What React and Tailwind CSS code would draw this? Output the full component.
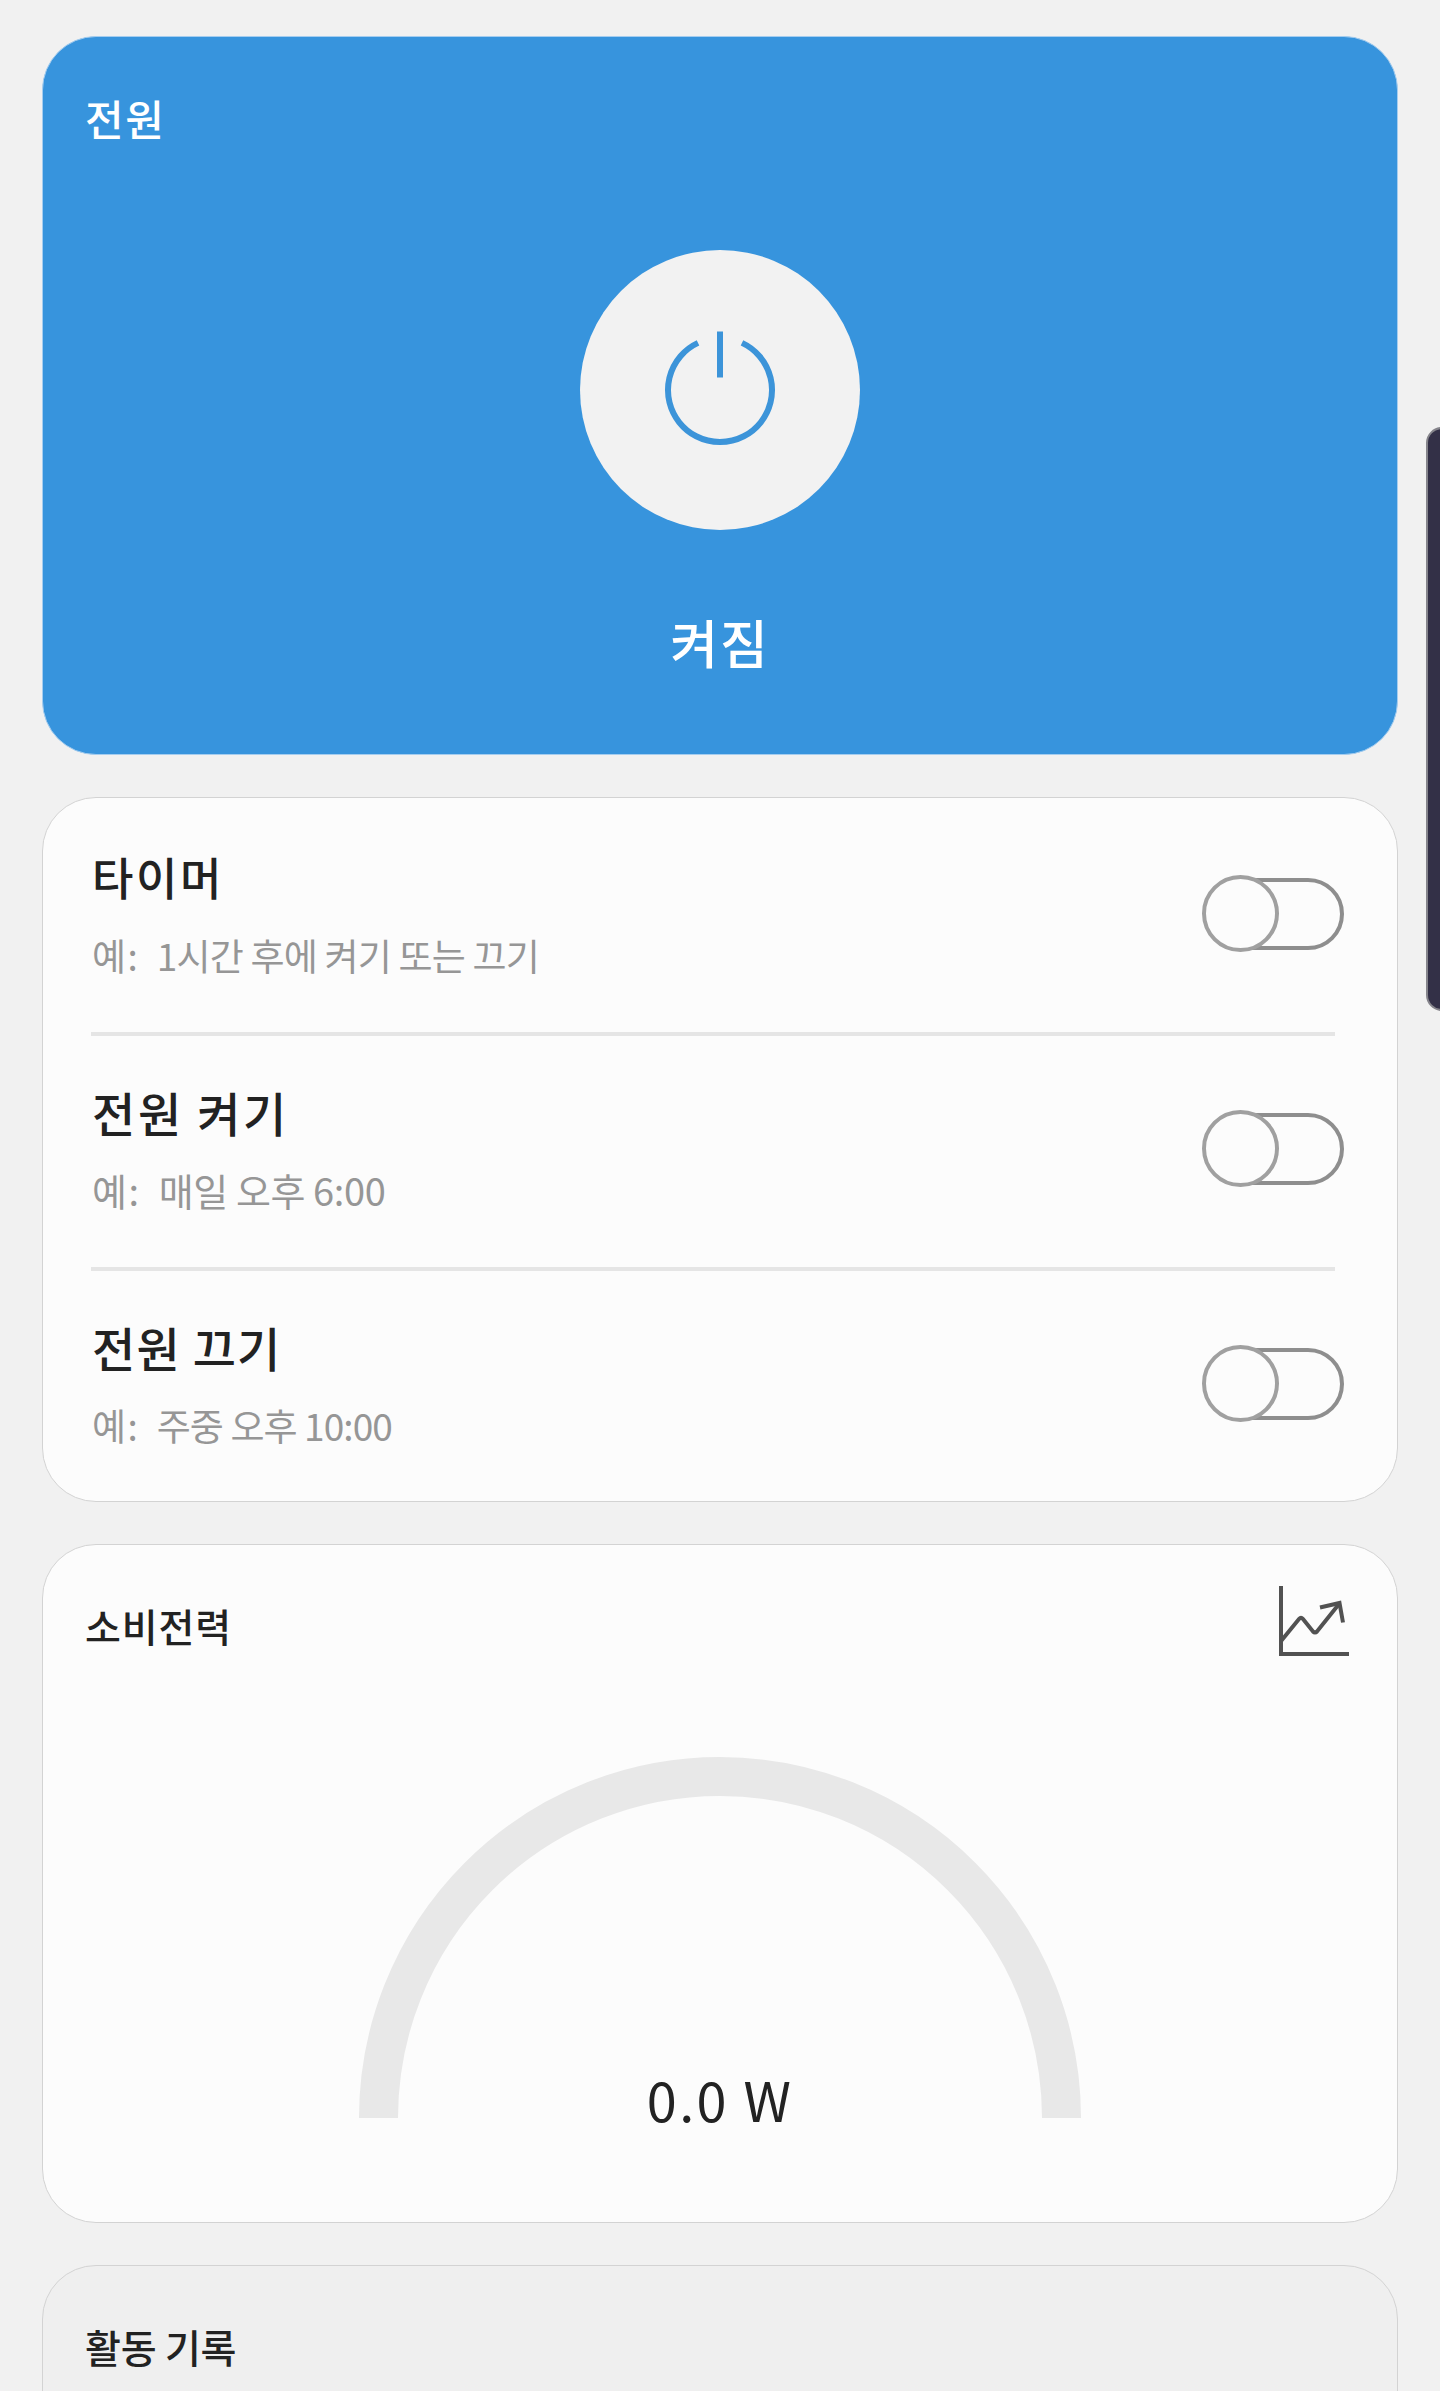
import React, { useState } from "react";

const schedules = [
  {
    id: "timer",
    titulo: "타이머",
    hint: "1시간 후에 켜기 또는 끄기",
    titleClass: "text-[45px] tracking-[2.6px]",
    hintClass: "text-[37px] tracking-[-0.8px]",
  },
  {
    id: "on",
    titulo: "전원 켜기",
    hint: "매일 오후 6:00",
    titleClass: "text-[47px] tracking-[2.7px]",
    hintClass: "text-[38px] tracking-[-0.4px]",
  },
  {
    id: "off",
    titulo: "전원 끄기",
    hint: "주중 오후 10:00",
    titleClass: "text-[47px] tracking-[1.2px]",
    hintClass: "text-[37px] tracking-[-0.9px]",
  },
];

function PowerIcon() {
  return (
    <svg width="120" height="120" viewBox="0 0 120 120" fill="none" stroke="#3c94d9" strokeWidth="6">
      <path d="M38 12.9A52 52 0 1 0 82 12.9" />
      <path d="M60 1.5V47.5" />
    </svg>
  );
}

function ChartIcon() {
  return (
    <svg width="72" height="72" viewBox="0 0 72 72" fill="none" stroke="#525252" strokeWidth="4">
      <path d="M3 1V69H71" />
      <path d="M3.5 55.5L21.2 33.8Q23 31.8 24.8 33.8L35 46.5Q37 48.6 39 46.5L61 19" />
      <path d="M42 22.5L61.5 18L65 37.5" />
    </svg>
  );
}

function Toggle({ checked, onChange }) {
  return (
    <button
      type="button"
      role="switch"
      aria-checked={checked}
      onClick={onChange}
      className="relative w-[142px] h-[77px] shrink-0 flex items-center justify-end"
    >
      <span className="w-[138px] h-[72px] rounded-full border-4 border-[#8e8e8e]" />
      <span
        className={`absolute top-0 w-[77px] h-[77px] rounded-full border-4 border-[#a0a0a0] bg-[#fcfcfc] ${
          checked ? "right-0" : "left-0"
        }`}
      />
    </button>
  );
}

function App() {
  const [active, setActive] = useState({});

  const toggle = (id) => setActive((prev) => ({ ...prev, [id]: !prev[id] }));

  return (
    <div className="relative h-[2391px] overflow-hidden bg-[#f1f1f1] px-[42px] pt-9 flex flex-col gap-[42px] text-[#222222] font-medium font-['Noto_Sans_CJK_KR',sans-serif]">
      <section className="h-[719px] shrink-0 rounded-[54px] border border-[#a5cdef] bg-[#3794dd] text-white flex flex-col items-center">
        <h2 className="self-start ml-[42px] mt-[51px] text-[42px] leading-[60px] tracking-[1.5px]">전원</h2>
        <button
          type="button"
          className="mt-[102px] w-[280px] h-[280px] shrink-0 rounded-full bg-[#f2f2f2] flex items-center justify-center"
        >
          <PowerIcon />
        </button>
        <p className="mt-[76px] text-[52px] leading-[72px] tracking-[2px]">켜짐</p>
      </section>

      <section className="h-[705px] shrink-0 rounded-[54px] border border-[#d3d3d3] bg-[#fcfcfc]">
        {schedules.map((item, idx) => (
          <div key={item.id} className={idx === 0 ? "h-[234px]" : "h-[235px]"}>
            {idx > 0 && <div className="h-1 ml-12 mr-[62px] bg-[#e5e5e5]" />}
            <div
              className={`flex items-start justify-between pl-[49px] pr-[53px] ${
                idx === 0 ? "pt-[45px]" : "pt-[42px]"
              }`}
            >
              <div>
                <h3 className={`leading-[68px] whitespace-nowrap ${item.titleClass}`}>{item.titulo}</h3>
                <p className={`mt-[16px] leading-[56px] font-normal whitespace-nowrap text-[#969696] ${item.hintClass}`}>
                  <span className="mr-[10px] tracking-[1.5px]">예:</span> {item.hint}
                </p>
              </div>
              <div className="mt-8">
                <Toggle checked={!!active[item.id]} onChange={() => toggle(item.id)} />
              </div>
            </div>
          </div>
        ))}
      </section>

      <section className="h-[679px] shrink-0 rounded-[54px] border border-[#d3d3d3] bg-[#fcfcfc] flex flex-col items-center">
        <div className="w-full flex items-start justify-between pl-[42px] pr-[47px] pt-[40px]">
          <h2 className="mt-[10px] text-[39px] leading-[60px] tracking-[0.9px]">소비전력</h2>
          <ChartIcon />
        </div>
        <div className="relative mt-[100px] w-[722px] h-[361px] shrink-0">
          <svg width="722" height="361" viewBox="0 0 722 361" fill="none">
            <path d="M19.5 361A341.5 341.5 0 0 1 702.5 361" stroke="#e8e8e8" strokeWidth="39" />
          </svg>
          <p className="absolute inset-x-0 bottom-[-16px] text-center text-[54px] leading-[70px] tracking-[2.4px] font-normal">
            0.0 W
          </p>
        </div>
      </section>

      <section className="h-[240px] shrink-0 rounded-t-[54px] border border-[#d3d3d3] bg-[#efefef] pl-[42px] pt-[50px]">
        <h2 className="text-[39px] leading-[60px] tracking-[-0.2px]">활동 기록</h2>
      </section>

      {/* edge panel handle */}
      <div className="absolute left-[1426px] top-[427px] w-[40px] h-[584px] rounded-[16px] border-2 border-[#85848b] bg-[#333047]" />
    </div>
  );
}

export default App;
